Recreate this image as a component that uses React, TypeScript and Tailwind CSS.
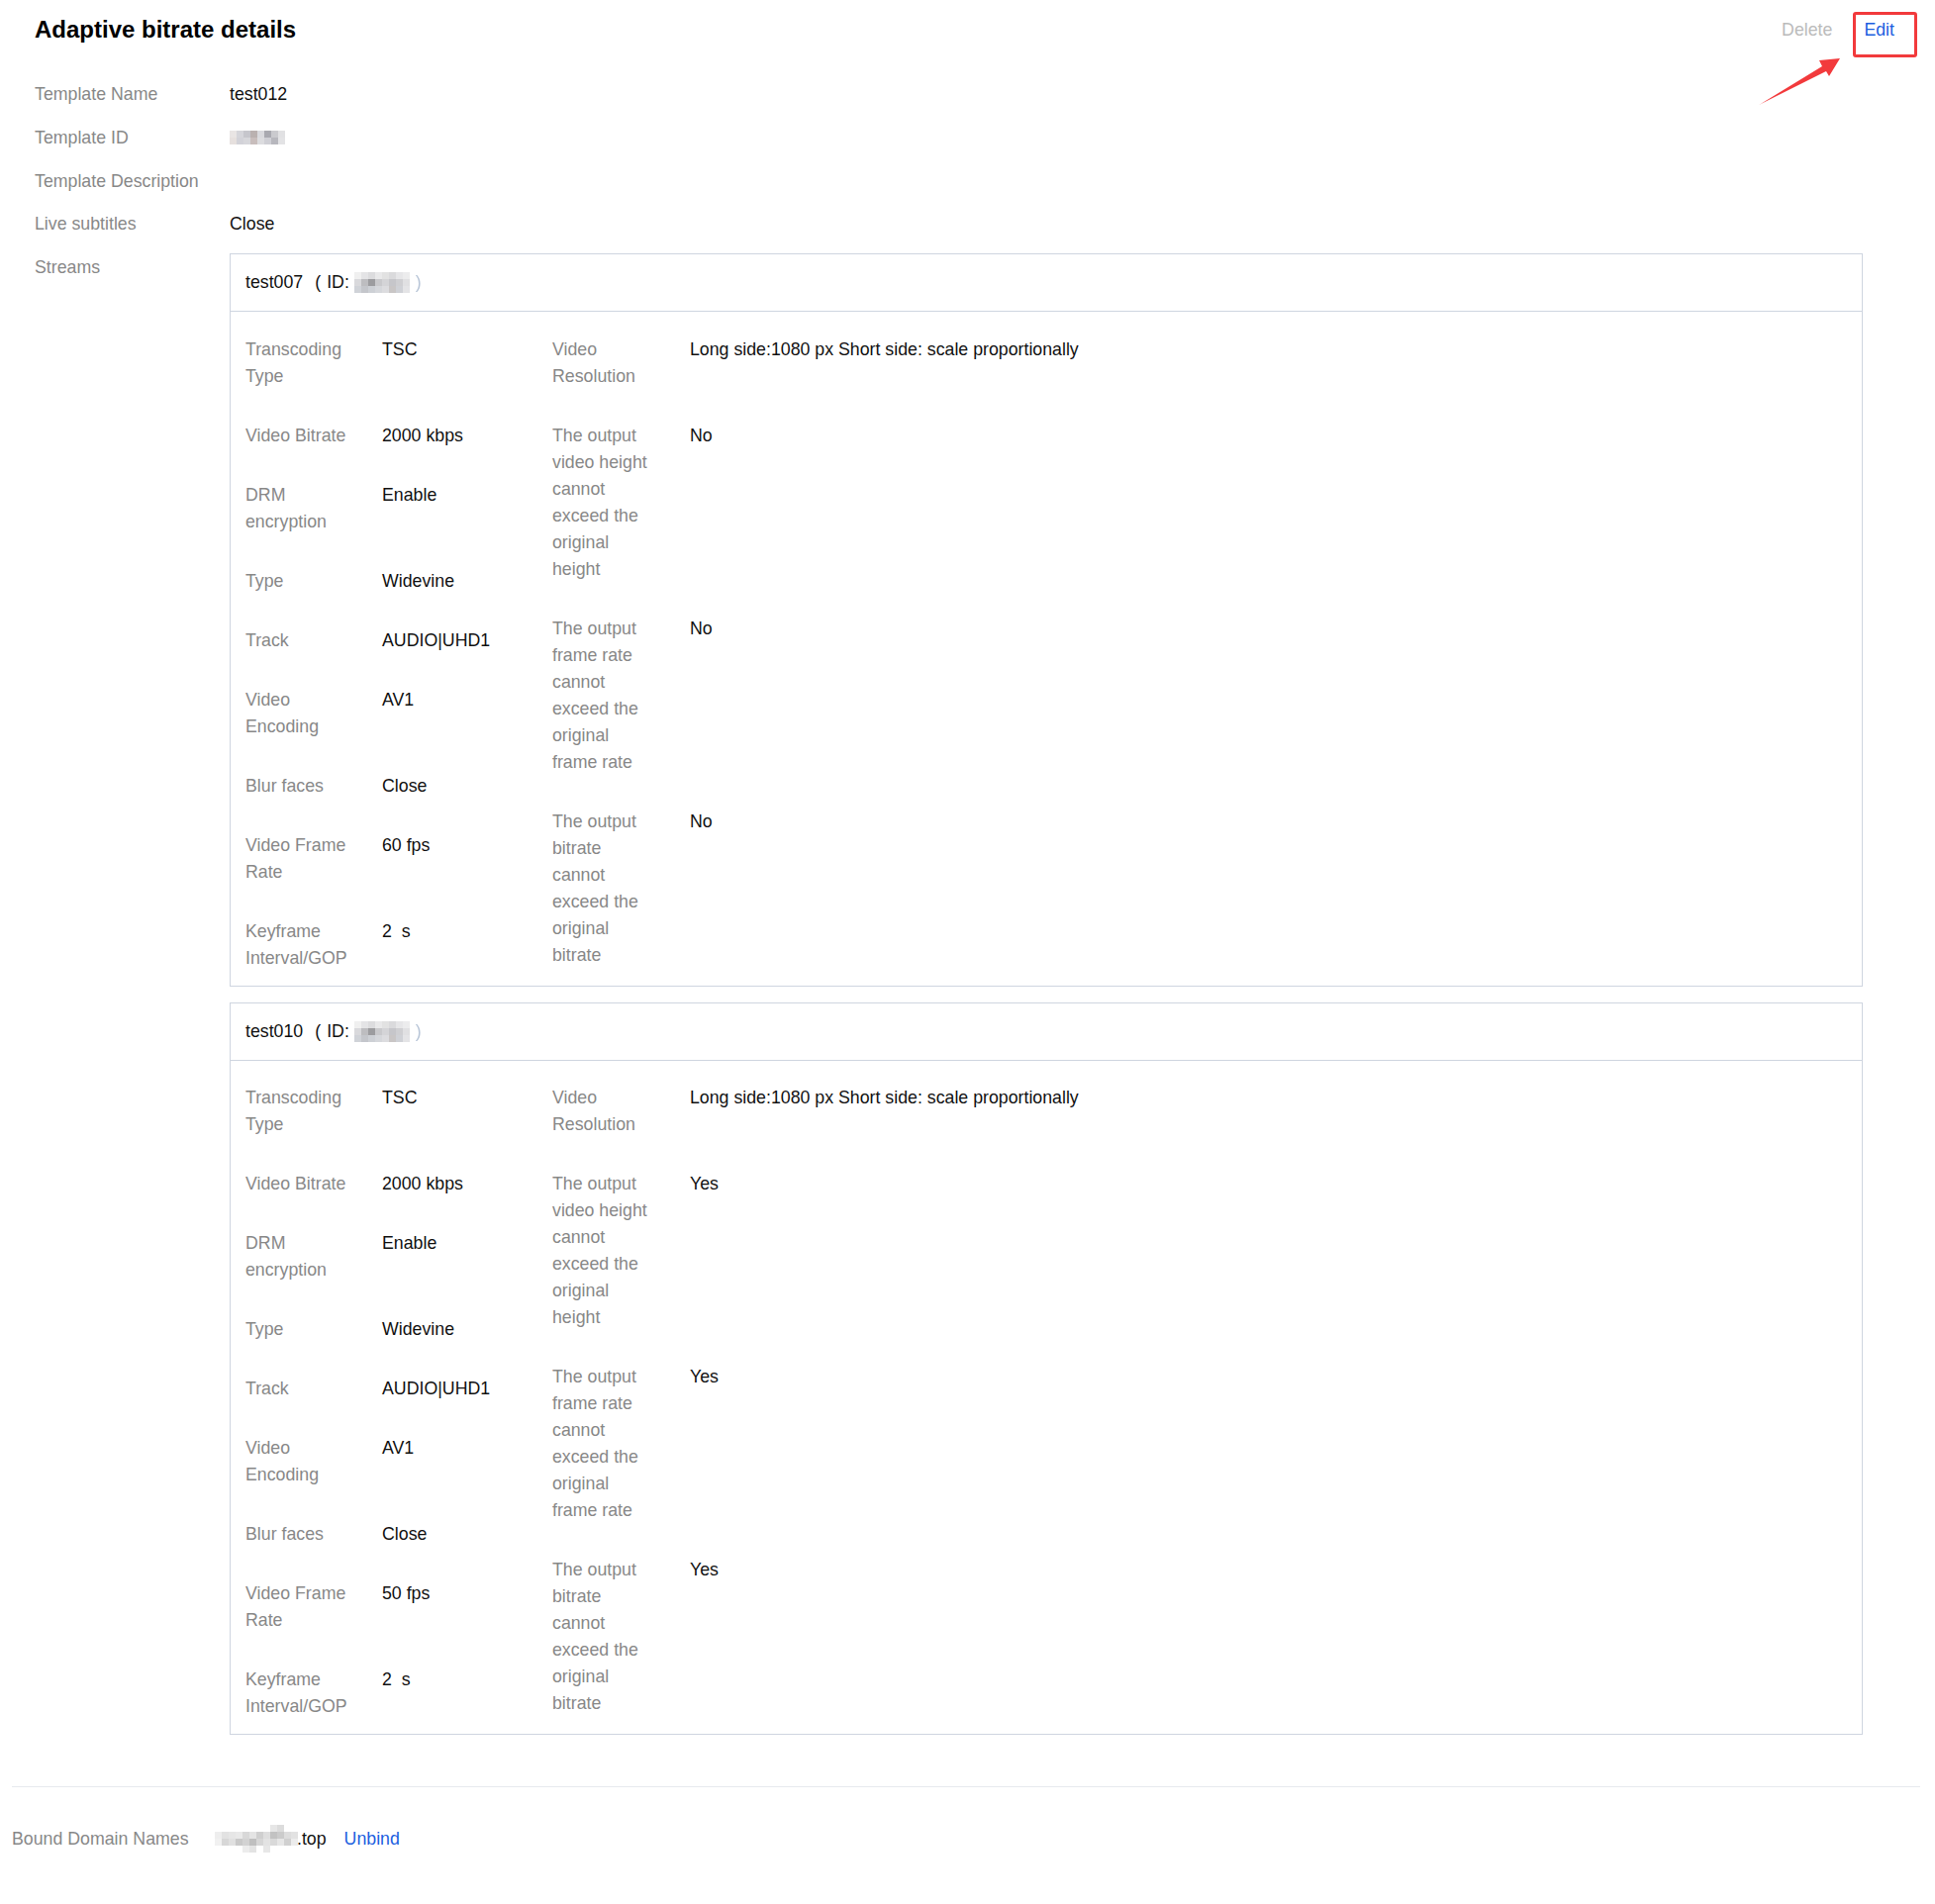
import React from "react";

const BORDER = "border-[#cfd5e0]";

function Mosaic({ cols, cells }: { cols: number; cells: string[] }) {
  return (
    <div className="grid" style={{ gridTemplateColumns: `repeat(${cols}, 7px)` }}>
      {cells.map((c, i) => (
        <div key={i} className={`h-[7px] w-[7px] ${c}`} />
      ))}
    </div>
  );
}

const idCells = [
  "bg-[#e9e5e4]", "bg-[#d5d5da]", "bg-[#c6c6cc]", "bg-[#bab1b0]", "bg-[#d9d9dd]", "bg-[#a9a9b0]", "bg-[#cacace]", "bg-[#e1e1e3]",
  "bg-[#e6e0de]", "bg-[#d2d2d8]", "bg-[#d7d7db]", "bg-[#c8bdbc]", "bg-[#dcdcdf]", "bg-[#cfcfd5]", "bg-[#b7b7bd]", "bg-[#e3e3e5]",
];

const hdrCells = [
  "bg-[#f0f0f0]", "bg-[#e4e4e6]", "bg-[#dcdcde]", "bg-[#e9e9ea]", "bg-[#e2e2e2]", "bg-[#dadadc]", "bg-[#e6e6e8]", "bg-[#ececed]",
  "bg-[#d9d9dc]", "bg-[#bdbdc0]", "bg-[#9c9c9f]", "bg-[#c9c9cc]", "bg-[#d4d4d7]", "bg-[#c6c6ca]", "bg-[#cfcfd2]", "bg-[#e0e0e2]",
  "bg-[#d0d3d8]", "bg-[#c4c6cb]", "bg-[#cdd0d5]", "bg-[#d5d7db]", "bg-[#dcdcdf]", "bg-[#c9c6c6]", "bg-[#cfd1d6]", "bg-[#e4e4e6]",
];

const domainCells = [
  "bg-transparent", "bg-transparent", "bg-transparent", "bg-transparent", "bg-transparent", "bg-transparent", "bg-transparent", "bg-transparent", "bg-[#e6e6e6]", "bg-[#dcdcdc]", "bg-transparent", "bg-transparent",
  "bg-[#eeeeee]", "bg-[#e2e2e2]", "bg-[#e6e6e6]", "bg-[#e9e9e9]", "bg-[#d8d8d8]", "bg-[#e4e4e4]", "bg-[#cfcfcf]", "bg-[#dedede]", "bg-[#c2c2c2]", "bg-[#cbcbcb]", "bg-[#dddddd]", "bg-[#e2e2e2]",
  "bg-[#f1f1f1]", "bg-[#d7d7d7]", "bg-[#e0e0e0]", "bg-[#c9c9c9]", "bg-[#d2d2d2]", "bg-[#bfbfbf]", "bg-[#d6d6d6]", "bg-[#e3e3e3]", "bg-[#d9d9d9]", "bg-[#e6e6e6]", "bg-[#d0d0d0]", "bg-[#ececec]",
  "bg-transparent", "bg-transparent", "bg-transparent", "bg-transparent", "bg-[#ececec]", "bg-[#e3e3e3]", "bg-transparent", "bg-[#e7e7e7]", "bg-transparent", "bg-transparent", "bg-transparent", "bg-transparent",
];

type Item = { label: string[]; value: string };

function Field({ item, labelW }: { item: Item; labelW: string }) {
  return (
    <div className="flex">
      <div className={`${labelW} shrink-0 text-[#888888]`}>
        {item.label.map((l, i) => (
          <div key={i} className="whitespace-nowrap">{l}</div>
        ))}
      </div>
      <div className="whitespace-pre text-[#111111]">{item.value}</div>
    </div>
  );
}

function StreamBox({ name, fps, flag }: { name: string; fps: string; flag: string }) {
  const left: Item[] = [
    { label: ["Transcoding", "Type"], value: "TSC" },
    { label: ["Video Bitrate"], value: "2000 kbps" },
    { label: ["DRM", "encryption"], value: "Enable" },
    { label: ["Type"], value: "Widevine" },
    { label: ["Track"], value: "AUDIO|UHD1" },
    { label: ["Video", "Encoding"], value: "AV1" },
    { label: ["Blur faces"], value: "Close" },
    { label: ["Video Frame", "Rate"], value: fps },
    { label: ["Keyframe", "Interval/GOP"], value: "2  s" },
  ];
  const right: Item[] = [
    { label: ["Video", "Resolution"], value: "Long side:1080 px Short side: scale proportionally" },
    { label: ["The output", "video height", "cannot", "exceed the", "original", "height"], value: flag },
    { label: ["The output", "frame rate", "cannot", "exceed the", "original", "frame rate"], value: flag },
    { label: ["The output", "bitrate", "cannot", "exceed the", "original", "bitrate"], value: flag },
  ];
  return (
    <div className={`w-[1650px] border ${BORDER}`}>
      <div className={`flex h-[58px] items-center border-b ${BORDER} px-[15px] text-[#111111]`}>
        <span>{name}</span>
        <span className="ml-[12px]">(</span>
        <span className="ml-[6px]">ID:</span>
        <div className="ml-[5px]">
          <Mosaic cols={8} cells={hdrCells} />
        </div>
        <span className="ml-[6px] text-[#b9c6d8] blur-[0.5px]">)</span>
      </div>
      <div className="flex pb-[14px] pl-[15px] pt-[24.5px]">
        <div className="flex w-[310px] shrink-0 flex-col gap-[33px]">
          {left.map((it, i) => (
            <Field key={i} item={it} labelW="w-[138px]" />
          ))}
        </div>
        <div className="flex flex-col gap-[33px]">
          {right.map((it, i) => (
            <Field key={i} item={it} labelW="w-[139px]" />
          ))}
        </div>
      </div>
    </div>
  );
}

export default function App() {
  return (
    <div className="relative min-h-[1924px] w-[1955px] bg-white font-['Liberation_Sans',Arial,sans-serif] text-[17.75px] leading-[27px]">
      {/* header */}
      <div className="flex h-[45px] items-center justify-between pl-[35px] pr-[41px] pt-[15px]">
        <h1 className="text-[24px] font-bold leading-[30px] text-[#000000]">Adaptive bitrate details</h1>
        <div className="flex items-center gap-[32px]">
          <span className="text-[#bbbbbb]">Delete</span>
          <span className="text-[#1c5fe0]">Edit</span>
        </div>
      </div>

      {/* annotation overlay */}
      <div className="absolute left-[1872px] top-[12px] h-[46px] w-[65px] rounded-[3px] border-[3px] border-[#f23a3c]" />
      <svg className="absolute left-[1770px] top-[50px]" width="100" height="65" viewBox="0 0 100 65">
        <polygon points="7,56 71,17 68,11 89,9 78,27 75,22" fill="#f23a3c" />
      </svg>

      {/* info */}
      <div className="mt-[37px] flex flex-col gap-[16.75px] pl-[35px]">
        <div className="flex">
          <div className="w-[197px] shrink-0 text-[#888888]">Template Name</div>
          <div className="text-[#111111]">test012</div>
        </div>
        <div className="flex items-center">
          <div className="w-[197px] shrink-0 text-[#888888]">Template ID</div>
          <Mosaic cols={8} cells={idCells} />
        </div>
        <div className="flex">
          <div className="w-[197px] shrink-0 text-[#888888]">Template Description</div>
          <div />
        </div>
        <div className="flex">
          <div className="w-[197px] shrink-0 text-[#888888]">Live subtitles</div>
          <div className="text-[#111111]">Close</div>
        </div>
        <div className="flex">
          <div className="w-[197px] shrink-0 text-[#888888]">Streams</div>
          <div className="-mt-[1px] flex flex-col gap-[16px]">
            <StreamBox name="test007" fps="60 fps" flag="No" />
            <StreamBox name="test010" fps="50 fps" flag="Yes" />
          </div>
        </div>
      </div>

      {/* divider */}
      <div className="mx-[12px] mt-[52px] h-px w-[1928px] bg-[#e7e9ee]" />

      {/* bound domains */}
      <div className="mt-[38px] flex items-center pl-[12px]">
        <div className="w-[205px] shrink-0 text-[#888888]">Bound Domain Names</div>
        <div className="flex items-center">
          <Mosaic cols={12} cells={domainCells} />
          <span className="-ml-[1px] text-[#111111]">.top</span>
        </div>
        <span className="ml-[18px] text-[#1c5fe0]">Unbind</span>
      </div>
    </div>
  );
}
